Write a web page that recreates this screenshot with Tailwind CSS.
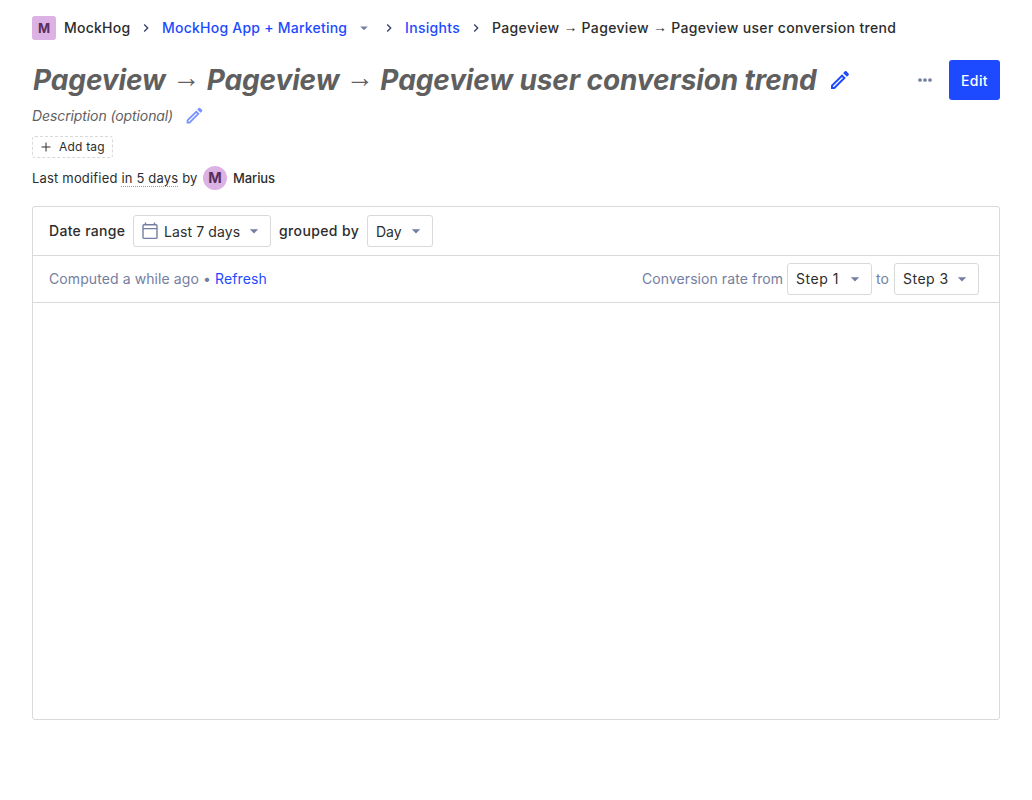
<!DOCTYPE html>
<html lang="en">
<head>
<meta charset="utf-8">
<title>Insight</title>
<script src="https://cdn.jsdelivr.net/npm/@tailwindcss/browser@4"></script>
</head>
<body class="bg-white font-['Inter',sans-serif] text-sm leading-5 text-[#2d2d2d]">
<svg class="hidden">
  <symbol id="chev" viewBox="0 0 24 24"><path d="M8.6 16.6 13.2 12 8.6 7.4 10 6l6 6-6 6z" fill="#35416b"/></symbol>
  <symbol id="drop" viewBox="0 0 24 24"><path d="M7 10l5 5 5-5z" fill="#747ea1"/></symbol>
  <symbol id="pencil" viewBox="0 0 24 24"><path fill="#1d4aff" d="M14.06 9.02l.92.92L5.92 19H5v-.92l9.06-9.06M17.66 3c-.25 0-.51.1-.7.29l-1.83 1.83 3.75 3.75 1.83-1.83c.39-.39.39-1.02 0-1.41l-2.34-2.34c-.2-.2-.45-.29-.71-.29zm-3.6 3.19L3 17.25V21h3.75L17.81 9.94l-3.75-3.75z"/></symbol>
</svg>
<main class="px-8 pt-4 whitespace-nowrap">
  <nav class="flex h-6 items-center font-medium tracking-[0.23px]">
    <div class="flex size-6 items-center justify-center rounded-[3px] bg-[#dcb1e3] text-[13px] font-bold tracking-normal text-[#572e5e]">M</div>
    <span class="ml-2 w-[66px]">MockHog</span>
    <svg class="mx-2 size-4"><use href="#chev"/></svg>
    <a class="w-[185px] text-[#1d4aff]">MockHog App + Marketing</a>
    <svg class="ml-2 size-[18px]"><use href="#drop"/></svg>
    <svg class="mx-2 size-4"><use href="#chev"/></svg>
    <a class="w-[55px] tracking-[0.32px] text-[#1d4aff]">Insights</a>
    <svg class="mx-2 size-4"><use href="#chev"/></svg>
    <span class="tracking-[0.345px]">Pageview <span class="align-[1px] font-['Liberation_Sans',sans-serif] leading-none font-normal tracking-normal">→</span> Pageview <span class="align-[1px] font-['Liberation_Sans',sans-serif] leading-none font-normal tracking-normal">→</span> Pageview user conversion trend</span>
  </nav>
  <header class="mt-5 flex h-10 items-center">
    <h1 class="w-[785px] pl-px text-[28px] leading-10 font-bold tracking-[-0.12px] text-[#5f5f5f] italic">Pageview <span class="align-[3px] font-['Liberation_Sans',sans-serif] leading-none font-normal tracking-normal">→</span> Pageview <span class="align-[3px] font-['Liberation_Sans',sans-serif] leading-none font-normal tracking-normal">→</span> Pageview user conversion trend</h1>
    <svg class="ml-[11px] size-6"><use href="#pencil"/></svg>
    <svg class="mr-3 ml-auto size-6" viewBox="0 0 24 24" fill="#747ea1"><circle cx="7" cy="12" r="1.85"/><circle cx="12" cy="12" r="1.85"/><circle cx="17" cy="12" r="1.85"/></svg>
    <button class="h-10 w-[51px] rounded-[3px] bg-[#1d4aff] pt-0.5 font-medium tracking-[0.4px] text-white">Edit</button>
  </header>
  <div class="mt-1 flex h-6 items-center">
    <span class="w-[140px] tracking-[-0.1px] text-[#5f5f5f] italic">Description (optional)</span>
    <svg class="mb-px ml-[11.5px] size-[21px] opacity-60"><use href="#pencil"/></svg>
  </div>
  <div class="mt-2 flex h-[22px] w-[81px] items-center rounded-[3px] border border-dashed border-[#d9d9d9] pl-2 text-xs">
    <svg class="size-[10px]" viewBox="0 0 10 10" stroke="#2d2d2d" fill="none"><path d="M5 .5v9M.5 5h9"/></svg>
    <span class="ml-2 tracking-[0.2px]">Add tag</span>
  </div>
  <div class="mt-2 flex h-6 items-center text-[13px]">
    <span class="w-[165px] tracking-[0.18px]">Last modified <span class="border-b border-dotted border-[#999]">in 5 days</span> by</span>
    <div class="mx-1.5 flex size-6 items-center justify-center rounded-full bg-[#dcb1e3] text-[14.5px] font-bold text-[#572e5e]">M</div>
    <span class="font-medium tracking-[-0.1px]">Marius</span>
  </div>
  <section class="mt-4 h-[514px] rounded-[3px] border border-[#d9d9d9]">
    <div class="flex h-[49px] items-center gap-2 border-b border-[#d9d9d9] px-4">
      <span class="w-[76px] font-medium tracking-[0.3px]">Date range</span>
      <button class="flex h-8 w-[138px] items-center rounded-[3px] border border-[#d9d9d9] pl-[7px]">
        <svg class="size-[18px]" viewBox="0 0 18 18" fill="none" stroke="#747ea1" stroke-width="1.4"><rect x="2" y="2.8" width="14" height="13.600" rx="1"/><path d="M2 6.600h14M4.500.6v2.200M13.500.6v2.200"/></svg>
        <span class="ml-[5px] pt-0.5 tracking-[0.1px]">Last 7 days</span>
        <svg class="mr-1.5 ml-auto size-5"><use href="#drop"/></svg>
      </button>
      <span class="w-20 font-medium tracking-[0.38px]">grouped by</span>
      <button class="flex h-8 w-[66px] items-center rounded-[3px] border border-[#d9d9d9] pl-2">
        <span class="pt-0.5">Day</span>
        <svg class="mr-1.5 ml-auto size-5"><use href="#drop"/></svg>
      </button>
    </div>
    <div class="flex h-[47px] items-center gap-1 border-b border-[#d9d9d9] pr-5 pl-4 text-[#747ea1]">
      <span class="mr-auto tracking-[0.09px]">Computed a while ago • <a class="tracking-[0.14px] text-[#1d4aff]">Refresh</a></span>
      <span class="w-[141px] tracking-[0.07px]">Conversion rate from</span>
      <button class="flex h-8 w-[85px] items-center rounded-[3px] border border-[#d9d9d9] pl-2 text-[#2d2d2d]">
        <span class="tracking-[0.55px]">Step 1</span>
        <svg class="mr-1.5 ml-auto size-5"><use href="#drop"/></svg>
      </button>
      <span class="w-[14px]">to</span>
      <button class="flex h-8 w-[85px] items-center rounded-[3px] border border-[#d9d9d9] pl-2 text-[#2d2d2d]">
        <span class="tracking-[0.5px]">Step 3</span>
        <svg class="mr-1.5 ml-auto size-5"><use href="#drop"/></svg>
      </button>
    </div>
  </section>
</main>
</body>
</html>
